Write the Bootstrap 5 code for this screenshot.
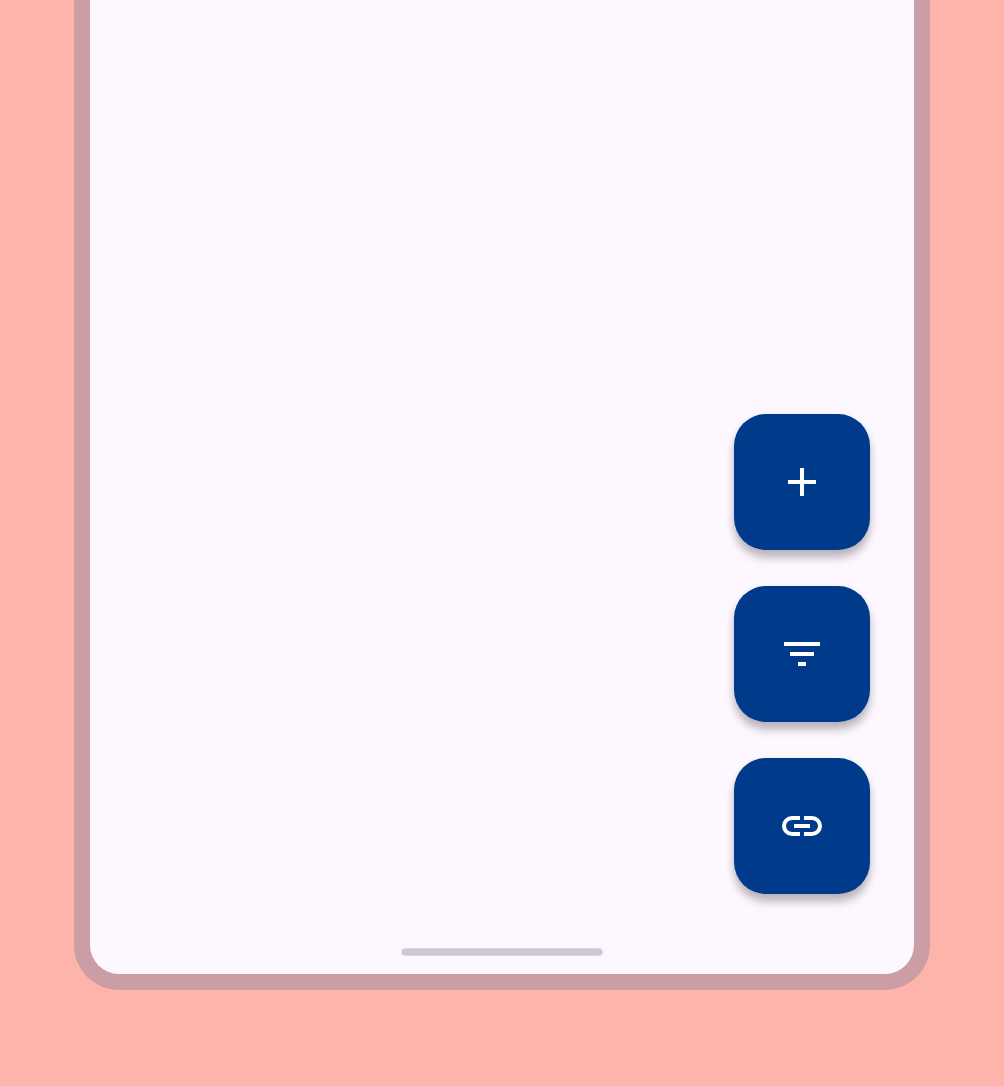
<!DOCTYPE html>
<html lang="en">
<head>
<meta charset="utf-8">
<meta name="viewport" content="width=device-width, initial-scale=1">
<title>Floating action buttons</title>
<link href="https://cdn.jsdelivr.net/npm/bootstrap@5.3.0/dist/css/bootstrap.min.css" rel="stylesheet">
<style>
body { background: #ffb4ab; }
.phone { width: 856px; height: 990px; background: #fdf8ff; border: 16px solid #cb9da4; border-top: 0; border-radius: 0 0 45px 45px; padding: 0 44px 18px; }
.fab-stack { gap: 36px; margin-bottom: 54px; }
.fab { width: 136px; height: 136px; border-radius: 32px; background: #003a8b; color: #fff; border: 0; box-shadow: 0 8px 8px rgba(20,5,12,.25), 0 2px 8px rgba(20,5,12,.06); }
.fab:hover { background: #003a8b; color: #fff; }
.home-handle { color: #d0c9d3; }
</style>
</head>
<body class="vh-100 overflow-hidden">
<main class="phone mx-auto d-flex flex-column justify-content-end">
  <div class="fab-stack d-flex flex-column align-items-end">
    <button type="button" class="fab btn p-0 d-flex align-items-center justify-content-center" aria-label="Add">
      <svg width="48" height="48" viewBox="0 0 24 24" fill="currentColor"><path d="M19 13h-6v6h-2v-6H5v-2h6V5h2v6h6z"/></svg>
    </button>
    <button type="button" class="fab btn p-0 d-flex align-items-center justify-content-center" aria-label="Filter">
      <svg width="48" height="48" viewBox="0 0 24 24" fill="currentColor"><path d="M10 18h4v-2h-4v2zM3 6v2h18V6H3zm3 7h12v-2H6v2z"/></svg>
    </button>
    <button type="button" class="fab btn p-0 d-flex align-items-center justify-content-center" aria-label="Link">
      <svg width="48" height="48" viewBox="0 0 24 24" fill="currentColor"><path d="M11 17H7a5 5 0 0 1 0-10h4v2H7a3 3 0 0 0 0 6h4zM8 13v-2h8v2zM13 17v-2h4a3 3 0 0 0 0-6h-4V7h4a5 5 0 0 1 0 10z"/></svg>
    </button>
  </div>
  <svg class="home-handle d-block mx-auto" width="202" height="8" viewBox="0 0 202 8" fill="currentColor" aria-hidden="true"><rect x=".4" y=".2" width="201.2" height="7.6" rx="3.8"/></svg>
</main>
<script src="https://cdn.jsdelivr.net/npm/bootstrap@5.3.0/dist/js/bootstrap.bundle.min.js"></script>
</body>
</html>
